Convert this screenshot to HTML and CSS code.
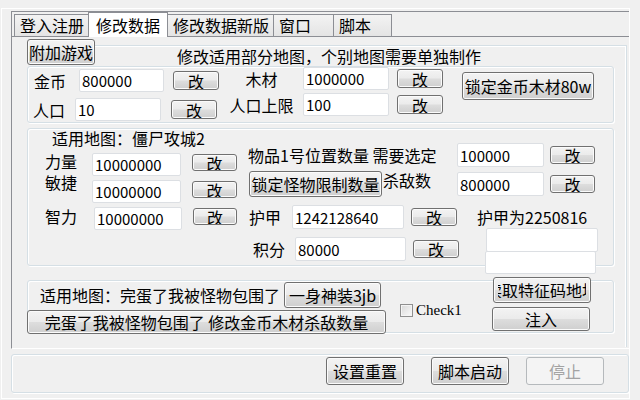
FILE: index.html
```html
<!DOCTYPE html>
<html lang="zh-CN">
<head>
<meta charset="UTF-8" />
<meta name="viewport" content="width=device-width, initial-scale=1" />
<title>修改数据</title>
<link rel="stylesheet" href="styles.css">
</head>
<body>

<div class="frame">
  <div class="tabctl">
    <div class="tabstrip">
      <div class="tab">登入注册</div>
      <div class="tab active">修改数据</div>
      <div class="tab">修改数据新版</div>
      <div class="tab">窗口</div>
      <div class="tab">脚本</div>
    </div>

    <div class="page">
      <div class="area">
        <div class="head">
          <button class="btn attach">附加游戏</button>
          <span class="head-note">修改适用部分地图，个别地图需要单独制作</span>
        </div>

        <!-- 金币 / 木材 -->
        <div class="group g1">
          <div class="col-a">
            <div class="row">
              <span class="lbl">金币</span>
              <input class="box" value="800000">
              <button class="btn">改</button>
            </div>
            <div class="row">
              <span class="lbl">人口</span>
              <input class="box" value="10">
              <button class="btn">改</button>
            </div>
          </div>
          <div class="col-b">
            <div class="row">
              <span class="lbl">木材</span>
              <input class="box" value="1000000">
              <button class="btn">改</button>
            </div>
            <div class="row">
              <span class="lbl">人口上限</span>
              <input class="box" value="100">
              <button class="btn">改</button>
            </div>
          </div>
          <button class="btn lock80">锁定金币木材80w</button>
        </div>

        <!-- 僵尸攻城2 -->
        <div class="group g2">
          <div class="col-l">
            <div class="title">适用地图：僵尸攻城2</div>
            <div class="row">
              <span class="lbl">力量</span>
              <input class="box" value="10000000">
              <button class="btn">改</button>
            </div>
            <div class="row">
              <span class="lbl">敏捷</span>
              <input class="box" value="10000000">
              <button class="btn">改</button>
            </div>
            <div class="row">
              <span class="lbl">智力</span>
              <input class="box" value="10000000">
              <button class="btn">改</button>
            </div>
          </div>
          <div class="col-r">
            <div class="row ra">
              <span class="note">物品1号位置数量 需要选定</span>
              <input class="box" value="100000">
              <button class="btn">改</button>
            </div>
            <div class="row rb">
              <button class="btn lockmob">锁定怪物限制数量</button>
              <span class="note">杀敌数</span>
              <input class="box" value="800000">
              <button class="btn">改</button>
            </div>
            <div class="row rc">
              <span class="lbl">护甲</span>
              <input class="box" value="1242128640">
              <button class="btn">改</button>
              <span class="armor">护甲为2250816</span>
            </div>
            <div class="row rd">
              <span class="lbl">积分</span>
              <input class="box" value="80000">
              <button class="btn">改</button>
              <div class="blanks">
                <input class="box">
                <input class="box">
              </div>
            </div>
          </div>
        </div>

        <!-- 完蛋了我被怪物包围了 -->
        <div class="group g3">
          <div class="col-l3">
            <div class="row">
              <span class="title">适用地图：完蛋了我被怪物包围了</span>
              <button class="btn gear">一身神装3jb</button>
            </div>
            <button class="btn modify">完蛋了我被怪物包围了 修改金币木材杀敌数量</button>
          </div>
          <label class="check"><span class="checkbox"></span>Check1</label>
          <div class="col-r3">
            <button class="btn read"><span class="clip"><span>读取特征码地址</span></span></button>
            <button class="btn inject">注入</button>
          </div>
        </div>
      </div>
    </div>
  </div>

  <div class="bottom">
    <button class="btn">设置重置</button>
    <button class="btn run">脚本启动</button>
    <button class="btn stop" disabled>停止</button>
  </div>
</div>

</body>
</html>
```

FILE: styles.css
```css
* {
  box-sizing: border-box;
}

body {
  margin: 0;
  width: 640px;
  height: 400px;
  overflow: hidden;
  background: #f0f0f0;
  font-family: "Noto Sans CJK SC", "Noto Sans", sans-serif;
  font-size: 16px;
  line-height: 18px;
  color: #000;
}

.frame {
  margin: 8px 0 0 1px;
  width: 629px;
  height: 391px;
  padding-top: 2px;
  border: 1px solid #fff;
}

/* tab control */
.tabctl {
  margin-left: 9px;
  width: 618px;
  height: 338px;
  border-top: 1px solid #8c8e94;
  border-left: 1px solid #8c8e94;
  border-bottom: 1px solid #fff;
}

.tabstrip {
  display: flex;
  align-items: flex-start;
  height: 25px;
  padding-left: 2px;
  border-bottom: 1px solid #8c8e94;
}

.tab {
  height: 22px;
  min-width: 59px;
  margin-top: 2px;
  padding: 1px 4px 0 5px;
  border: 1px solid #8c8e94;
  border-width: 1px 0 0 1px;
  background: linear-gradient(#f3f3f3, #e4e4e4);
  white-space: nowrap;
}

.tab:nth-child(4) {
  min-width: 60px;
}

.tab:last-child {
  border-right-width: 1px;
}

.tab.active {
  height: 25px;
  margin-top: 0;
  padding: 3px 7px 0;
  border-right-width: 1px;
  background: #fff;
}

.tab.active + .tab {
  border-left-width: 0;
}

.area {
  margin: 8px 0 0 15px;
  width: 600px;
  height: 302px;
  border-top: 1px solid #d5dfe5;
  border-right: 1px solid #d5dfe5;
  box-shadow: inset -1px 1px 0 #fff;
}

.head {
  display: flex;
  margin-top: -7px;
}

.head-note {
  align-self: flex-end;
  margin-left: 82px;
}

/* controls */
.btn {
  display: flex;
  align-items: center;
  justify-content: center;
  padding: 0;
  border: 1px solid #707070;
  border-radius: 3px;
  background: linear-gradient(#f3f3f3 0%, #ebebeb 48%, #dddddd 52%, #cfcfcf 100%);
  box-shadow: inset 0 0 0 1px #fbfbfb;
  font: inherit;
  line-height: 16px;
  color: #000;
  white-space: nowrap;
  overflow: hidden;
  flex: none;
}

.btn:disabled {
  border-color: #b5b9bc;
  background: #f4f4f4;
  box-shadow: none;
  color: #a3a3a3;
}

.box {
  flex: none;
  height: 23px;
  padding: 0 2px;
  border: 1px solid #dcdfe3;
  border-radius: 2px;
  background: #fff;
  font: 15px/21px "Noto Sans CJK SC", sans-serif;
  color: #000;
  outline: none;
}

.lbl,
.note {
  flex: none;
  white-space: nowrap;
}

.row {
  display: flex;
  align-items: center;
}

.group {
  width: 587px;
  border: 1px solid #d5dfe5;
  border-radius: 3px;
  box-shadow: inset 1px 1px 0 #fff, 1px 1px 0 #fff;
}

.attach {
  width: 68px;
  height: 26px;
}

/* group 1 */
.g1 {
  display: flex;
  align-items: flex-start;
  height: 57px;
  margin-top: 1px;
}

.col-a {
  margin: 2px 0 0 6px;
}

.col-a .lbl {
  width: 45px;
}

.col-a .box {
  width: 85px;
}

.col-a .btn {
  width: 46px;
  height: 19px;
  margin-left: 9px;
}

.col-a .row + .row {
  margin: 6px 0 0 -1px;
}

.col-a .row + .row .lbl {
  width: 42px;
}

.col-a .row + .row .box {
  width: 86px;
}

.col-a .row + .row .btn {
  margin-left: 10px;
}

.col-b {
  margin-left: 9px;
}

.col-b .lbl {
  width: 75px;
  padding-right: 8px;
  text-align: center;
}

.col-b .box {
  width: 86px;
}

.col-b .btn {
  width: 46px;
  height: 19px;
  margin-left: 8px;
}

.col-b .row + .row {
  margin-top: 3px;
}

.lock80 {
  width: 132px;
  height: 28px;
  margin: 5px 0 0 19px;
}

/* group 2 */
.g2 {
  display: flex;
  align-items: flex-start;
  height: 138px;
  margin-top: 5px;
}

.col-l {
  margin-left: 17px;
}

.col-l .title {
  padding-left: 7px;
}

.col-l .row {
  align-items: flex-start;
  margin-top: 4px;
}

.col-l .title + .row {
  margin-top: 6px;
}

.col-l .lbl {
  width: 47px;
  margin-top: -1px;
}

.col-l .box {
  width: 89px;
}

.col-l .btn {
  width: 45px;
  height: 17px;
  margin: 1px 0 0 11px;
}

.col-l .row:nth-child(3) .lbl {
  margin-top: -7px;
}

.col-l .row:last-child .lbl {
  width: 49px;
  margin-top: 0;
}

.col-l .row:last-child .box {
  width: 88px;
}

.col-l .row:last-child .btn {
  width: 44px;
}

.col-r {
  margin: 14px 0 0 11px;
}

.ra .note {
  width: 209px;
}

.ra .box,
.rb .box {
  width: 87px;
  height: 24px;
}

.ra .btn,
.rb .btn {
  width: 45px;
  height: 18px;
  margin-left: 6px;
}

.rb {
  margin-top: 4px;
}

.rb .lockmob {
  width: 133px;
  height: 26px;
  margin-left: 1px;
}

.rb .note {
  align-self: flex-start;
  width: 74px;
  margin-left: 1px;
}

.rc {
  margin-top: 8px;
}

.rc .lbl {
  width: 44px;
  padding-left: 1px;
}

.rc .box {
  width: 112px;
  height: 24px;
}

.rc .btn {
  width: 46px;
  height: 18px;
  margin-left: 7px;
}

.armor {
  margin-left: 20px;
}

.rd {
  align-items: flex-start;
  margin-top: 8px;
}

.rd .lbl {
  width: 47px;
  margin-top: 3px;
  padding-left: 5px;
}

.rd > .box {
  width: 111px;
  height: 24px;
}

.rd .btn {
  width: 46px;
  height: 18px;
  margin: 3px 0 0 7px;
}

.blanks {
  display: flex;
  flex-direction: column;
  margin: -9px 0 0 27px;
}

.blanks .box {
  width: 112px;
  height: 24px;
}

.blanks .box + .box {
  width: 111px;
  height: 23px;
  margin: -1px 0 0 -1px;
}

/* group 3 */
.g3 {
  display: flex;
  align-items: flex-start;
  height: 53px;
  margin-top: 14px;
  padding-right: 22px;
}

.col-l3 .row {
  margin: 1px 0 0 12px;
}

.gear {
  width: 97px;
  height: 26px;
  margin-left: 4px;
}

.modify {
  width: 359px;
  height: 24px;
  margin: 2px 0 0 -1px;
}

.check {
  display: flex;
  align-items: center;
  margin: 21px 0 0 14px;
  font: 15px/16px "Liberation Serif", serif;
}

.checkbox {
  width: 13px;
  height: 13px;
  margin-right: 3px;
  border: 1px solid #8f8f8f;
  background: linear-gradient(135deg, #d8d8d8, #fafafa);
  box-shadow: inset 0 0 0 1px #f4f4f4;
}

.col-r3 {
  width: 99px;
  margin: -4px 0 0 auto;
}

.read {
  width: 98px;
  height: 26px;
  margin-left: 1px;
}

.clip {
  display: flex;
  justify-content: center;
  width: 88px;
  overflow: hidden;
}

.inject {
  width: 98px;
  height: 24px;
  margin-top: 4px;
}

/* bottom bar */
.bottom {
  display: flex;
  justify-content: flex-end;
  align-items: flex-start;
  margin: 5px 0 0 9px;
  width: 618px;
  height: 39px;
  padding: 2px 24px 0 0;
  border: 1px solid #d5dfe5;
  border-radius: 3px;
  box-shadow: inset 1px 1px 0 #fff, 1px 1px 0 #fff;
}

.bottom .btn {
  width: 78px;
  height: 28px;
}

.bottom .run {
  margin-left: 27px;
}

.bottom .stop {
  margin-left: 17px;
}
```
